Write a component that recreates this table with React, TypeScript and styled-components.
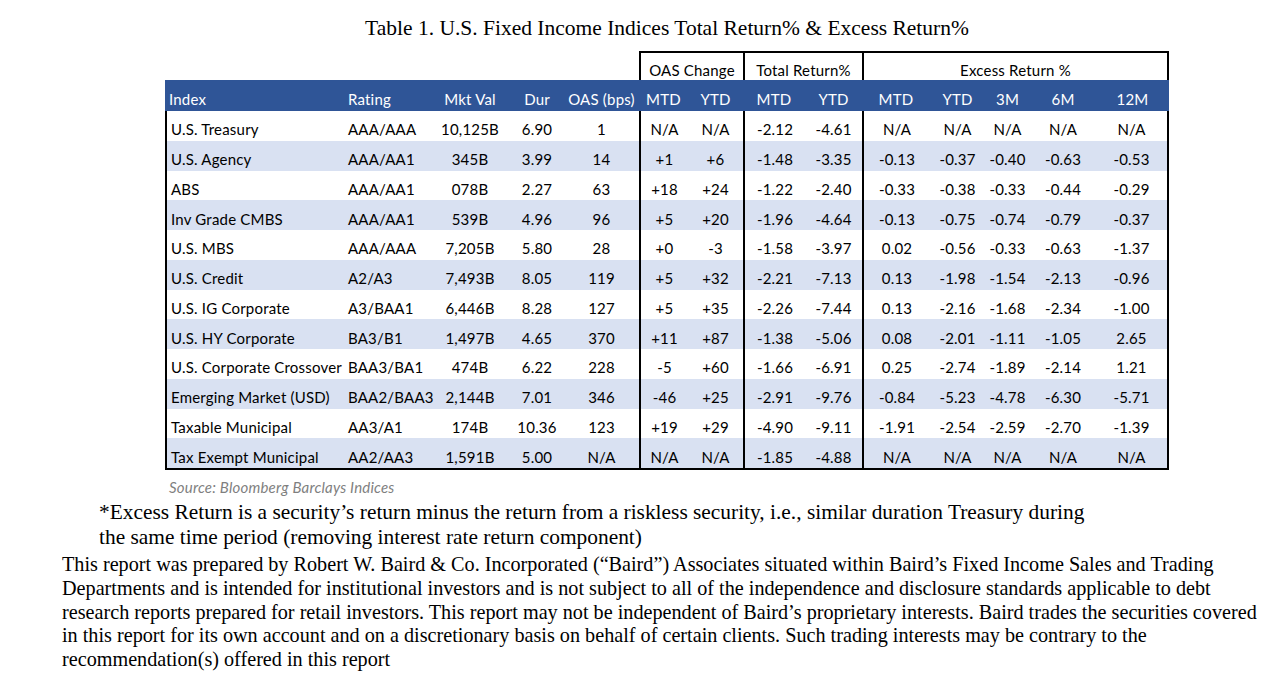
import React from "react";
import styled, { createGlobalStyle } from "styled-components";

const Global = createGlobalStyle`
  *, *::before, *::after { box-sizing: border-box; }
  html, body { margin: 0; padding: 0; background: #ffffff; }
  body { width: 1278px; height: 685px; overflow: hidden; }
`;

const COLS = "179px 92px 68px 66px 69px 49px 55px 62px 57px 68px 55px 45px 66px 73px";
const LINE = "2px solid #000";

const Page = styled.div`
  display: flex;
  flex-direction: column;
  padding-top: 16px;
`;

const TableBlock = styled.div`
  margin-left: 165px;
  width: 1004px;
  display: flex;
  flex-direction: column;
`;

const Title = styled.h1`
  margin: 0 0 11px 0;
  font-family: "Liberation Serif", "Times New Roman", serif;
  font-weight: normal;
  font-size: 21.5px;
  line-height: 24px;
  text-align: center;
  color: #000;
`;

const GridRow = styled.div<{ $h: number; $shade?: boolean; $blue?: boolean }>`
  display: grid;
  grid-template-columns: ${COLS};
  height: ${(p) => p.$h}px;
  background: ${(p) => (p.$blue ? "#2F5597" : p.$shade ? "#D9E1F2" : "transparent")};
  font-family: Lato, "Liberation Sans", sans-serif;
  font-size: 15px;
  color: ${(p) => (p.$blue ? "#ffffff" : "#000000")};
`;

const Cell = styled.div<{
  $align?: "left" | "center";
  $lb?: boolean;
  $rb?: boolean;
  $tb?: boolean;
  $span?: number;
  $pr?: number;
}>`
  display: flex;
  align-items: center;
  justify-content: ${(p) => (p.$align === "left" ? "flex-start" : "center")};
  padding-top: 7px;
  padding-left: ${(p) => (p.$align === "left" ? "4px" : "0")};
  padding-right: ${(p) => (p.$pr ? `${p.$pr}px` : "0")};
  border-left: ${(p) => (p.$lb ? LINE : "none")};
  border-right: ${(p) => (p.$rb ? LINE : "none")};
  border-top: ${(p) => (p.$tb ? LINE : "none")};
  grid-column: ${(p) => (p.$span ? `span ${p.$span}` : "auto")};
  white-space: nowrap;
  letter-spacing: 0.2px;
`;

const Body = styled.div`
  display: flex;
  flex-direction: column;
  border-bottom: ${LINE};
`;

const Source = styled.div`
  margin: 7px 0 0 169px;
  font-family: Lato, "Liberation Sans", sans-serif;
  font-style: italic;
  font-size: 15px;
  line-height: 20px;
  color: #7f7f7f;
  letter-spacing: 0.2px;
`;

const Footnote = styled.p`
  margin: 3px 0 0 99px;
  font-family: "Liberation Serif", "Times New Roman", serif;
  font-size: 21.4px;
  line-height: 25px;
  color: #000;
  white-space: nowrap;
`;

const Disclaimer = styled.p`
  margin: 3px 0 0 62px;
  font-family: "Liberation Serif", "Times New Roman", serif;
  font-size: 20.2px;
  line-height: 23.8px;
  color: #000;
  white-space: nowrap;
`;

type Row = string[];

const rows: Row[] = [
  ["U.S. Treasury", "AAA/AAA", "10,125B", "6.90", "1", "N/A", "N/A", "-2.12", "-4.61", "N/A", "N/A", "N/A", "N/A", "N/A"],
  ["U.S. Agency", "AAA/AA1", "345B", "3.99", "14", "+1", "+6", "-1.48", "-3.35", "-0.13", "-0.37", "-0.40", "-0.63", "-0.53"],
  ["ABS", "AAA/AA1", "078B", "2.27", "63", "+18", "+24", "-1.22", "-2.40", "-0.33", "-0.38", "-0.33", "-0.44", "-0.29"],
  ["Inv Grade CMBS", "AAA/AA1", "539B", "4.96", "96", "+5", "+20", "-1.96", "-4.64", "-0.13", "-0.75", "-0.74", "-0.79", "-0.37"],
  ["U.S. MBS", "AAA/AAA", "7,205B", "5.80", "28", "+0", "-3", "-1.58", "-3.97", "0.02", "-0.56", "-0.33", "-0.63", "-1.37"],
  ["U.S. Credit", "A2/A3", "7,493B", "8.05", "119", "+5", "+32", "-2.21", "-7.13", "0.13", "-1.98", "-1.54", "-2.13", "-0.96"],
  ["U.S. IG Corporate", "A3/BAA1", "6,446B", "8.28", "127", "+5", "+35", "-2.26", "-7.44", "0.13", "-2.16", "-1.68", "-2.34", "-1.00"],
  ["U.S. HY Corporate", "BA3/B1", "1,497B", "4.65", "370", "+11", "+87", "-1.38", "-5.06", "0.08", "-2.01", "-1.11", "-1.05", "2.65"],
  ["U.S. Corporate Crossover", "BAA3/BA1", "474B", "6.22", "228", "-5", "+60", "-1.66", "-6.91", "0.25", "-2.74", "-1.89", "-2.14", "1.21"],
  ["Emerging Market (USD)", "BAA2/BAA3", "2,144B", "7.01", "346", "-46", "+25", "-2.91", "-9.76", "-0.84", "-5.23", "-4.78", "-6.30", "-5.71"],
  ["Taxable Municipal", "AA3/A1", "174B", "10.36", "123", "+19", "+29", "-4.90", "-9.11", "-1.91", "-2.54", "-2.59", "-2.70", "-1.39"],
  ["Tax Exempt Municipal", "AA2/AA3", "1,591B", "5.00", "N/A", "N/A", "N/A", "-1.85", "-4.88", "N/A", "N/A", "N/A", "N/A", "N/A"],
];

const headers = ["Index", "Rating", "Mkt Val", "Dur", "OAS (bps)", "MTD", "YTD", "MTD", "YTD", "MTD", "YTD", "3M", "6M", "12M"];

const groupStarts = new Set([5, 7, 9]);

export default function App() {
  return (
    <Page>
      <Global />
      <TableBlock>
        <Title>Table 1. U.S. Fixed Income Indices Total Return% &amp; Excess Return%</Title>
        <GridRow $h={29}>
          <Cell $span={5} />
          <Cell $span={2} $lb $tb>OAS Change</Cell>
          <Cell $span={2} $lb $tb>Total Return%</Cell>
          <Cell $span={5} $lb $rb $tb>Excess Return %</Cell>
        </GridRow>
        <GridRow $h={31} $blue>
          {headers.map((h, i) => (
            <Cell key={i} $align={i < 2 ? "left" : "center"} $pr={i === 4 ? 6 : 0}>
              {h}
            </Cell>
          ))}
        </GridRow>
        <Body>
          {rows.map((r, ri) => (
            <GridRow key={ri} $h={29.75} $shade={ri % 2 === 1}>
              {r.map((v, i) => (
                <Cell
                  key={i}
                  $align={i < 2 ? "left" : "center"}
                  $lb={i === 0 || groupStarts.has(i)}
                  $rb={i === 13}
                  $pr={i === 4 ? 6 : 0}
                >
                  {v}
                </Cell>
              ))}
            </GridRow>
          ))}
        </Body>
      </TableBlock>
      <Source>Source: Bloomberg Barclays Indices</Source>
      <Footnote>
        *Excess Return is a security’s return minus the return from a riskless security, i.e., similar duration Treasury during
        <br />
        the same time period (removing interest rate return component)
      </Footnote>
      <Disclaimer>
        This report was prepared by Robert W. Baird &amp; Co. Incorporated (“Baird”) Associates situated within Baird’s Fixed Income Sales and Trading
        <br />
        Departments and is intended for institutional investors and is not subject to all of the independence and disclosure standards applicable to debt
        <br />
        research reports prepared for retail investors. This report may not be independent of Baird’s proprietary interests. Baird trades the securities covered
        <br />
        in this report for its own account and on a discretionary basis on behalf of certain clients. Such trading interests may be contrary to the
        <br />
        recommendation(s) offered in this report
      </Disclaimer>
    </Page>
  );
}
